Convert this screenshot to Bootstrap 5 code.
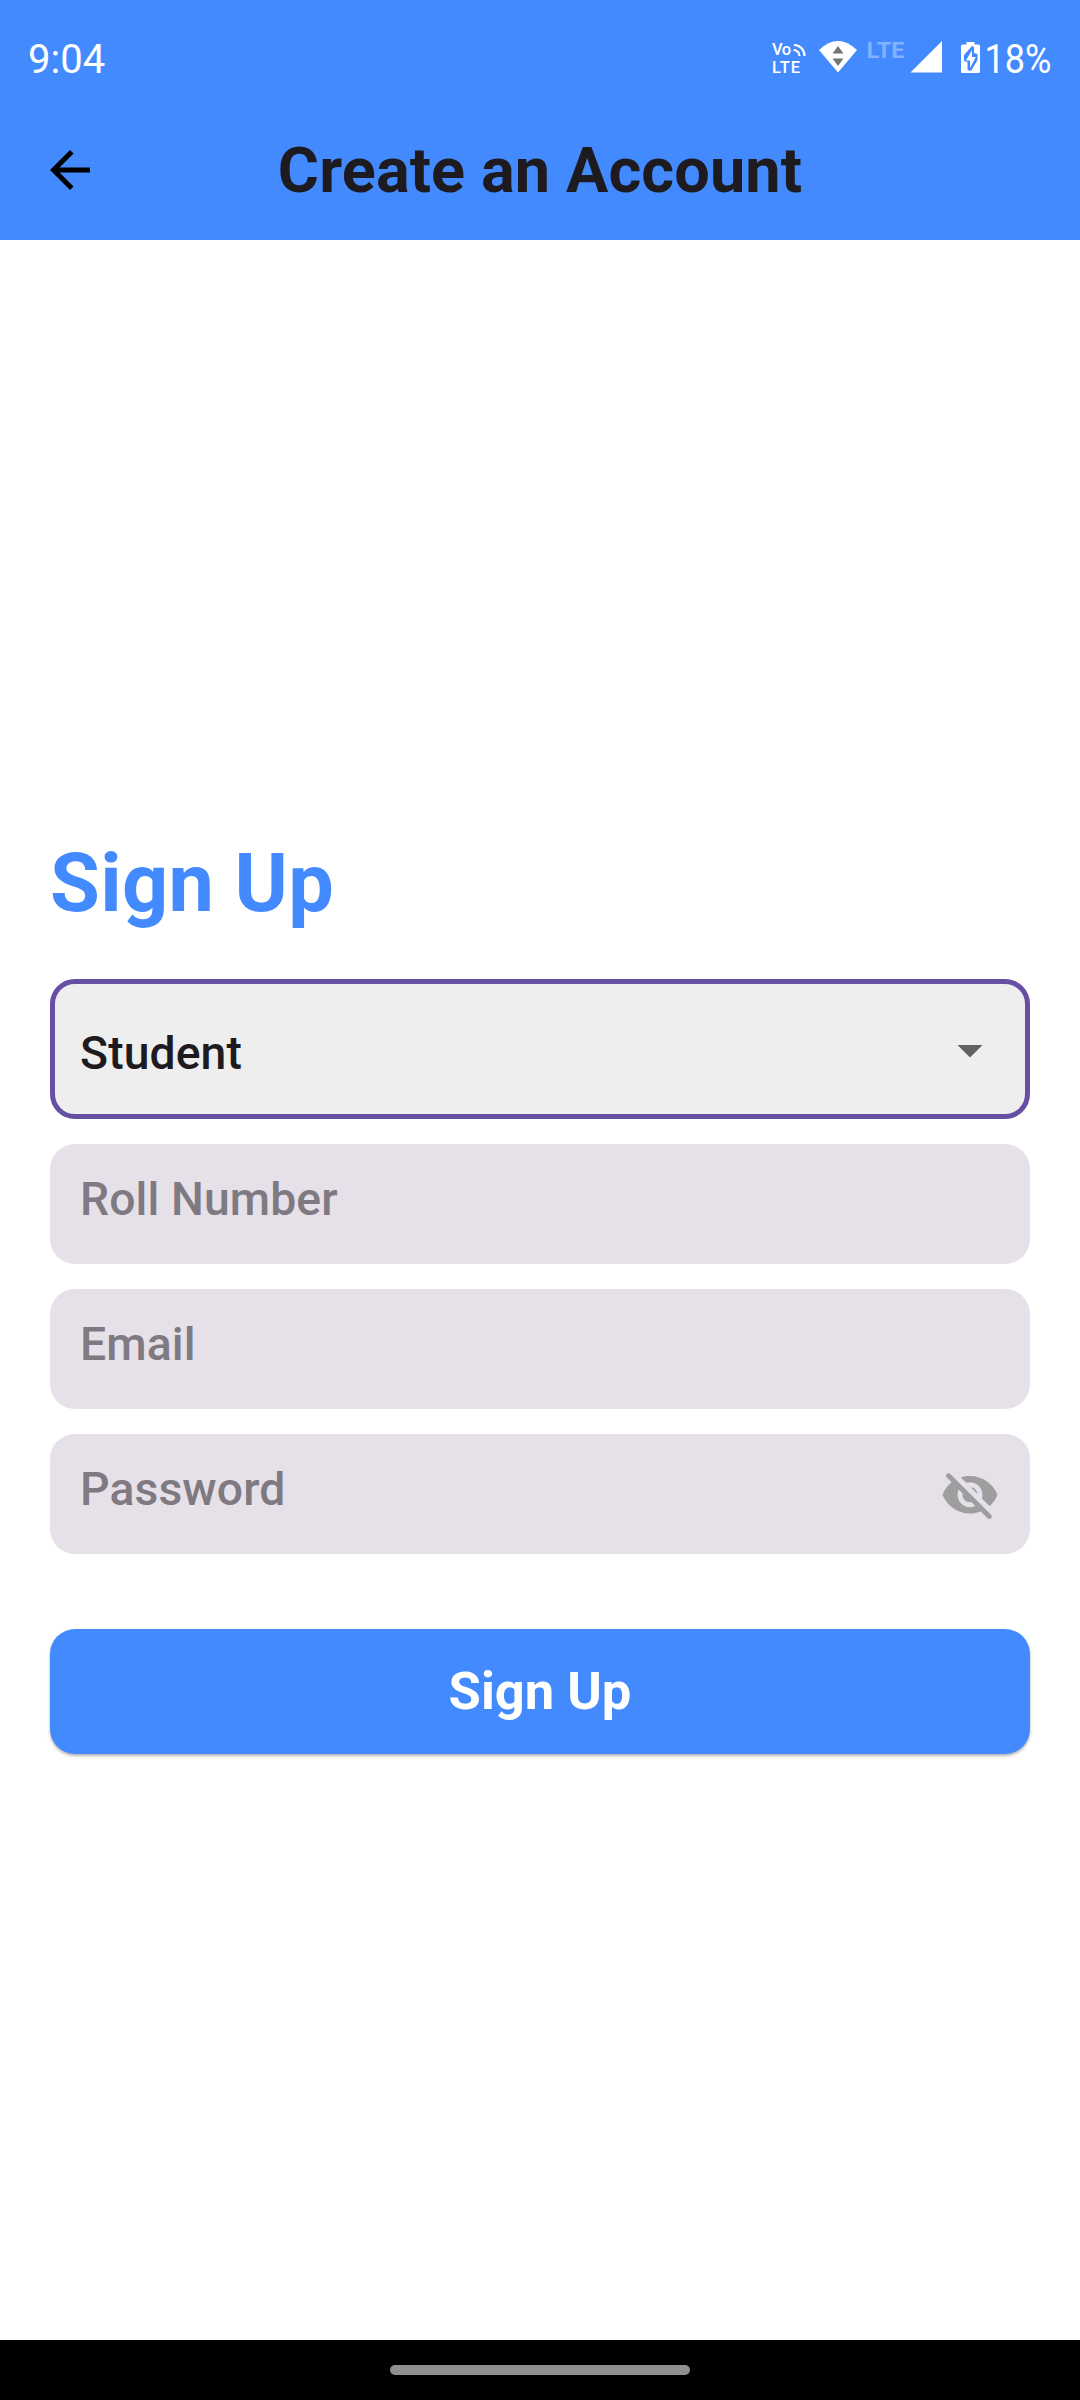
<!DOCTYPE html>
<html lang="en">
<head>
<meta charset="utf-8">
<meta name="viewport" content="width=device-width, initial-scale=1">
<title>Create an Account</title>
<link href="https://cdn.jsdelivr.net/npm/bootstrap@5.3.0/dist/css/bootstrap.min.css" rel="stylesheet">
<style>
body{font-family:Roboto,"Liberation Sans",sans-serif;height:2400px;background:#fff;overflow:hidden}
.app-header{background:#448aff;height:240px}
.status-bar{height:100px;padding:16px 16px 0 28px;font-size:40px;color:#fff}
.status-icons{margin-top:4px}
.clock{line-height:88px}
.app-bar{height:140px;padding:0 40px}
.app-bar svg{width:60px;height:60px}
.app-title{font-size:63px;font-weight:700;color:#1d1b20;line-height:80px;letter-spacing:.1px;padding-top:2px}
.screen-body{padding:0 50px 586px}
.form-title{font-size:81px;font-weight:700;color:#448aff;line-height:94px;margin-bottom:48px;letter-spacing:.3px}
.stack{gap:25px}
.field,.field:focus{height:120px;border:0;border-radius:25px;background:#e6e0e9;padding:0 30px 11px;font-size:46.3px;font-weight:500;letter-spacing:.1px;color:#1d1b20;box-shadow:none}
.field::placeholder{color:#7f7a82;opacity:1}
.picker{height:140px;border:5px solid #6750a4;border-radius:25px;background:#eee;padding:10px 25px 0 25px;font-size:46.3px;font-weight:500;letter-spacing:.1px;color:#1d1b20}
.icon60{width:60px;height:60px}
.picker .icon60{margin-top:-9px}
.eye-btn{right:30px;top:32px;line-height:0}
.submit{height:125px;margin-top:50px;border:0;border-radius:25px;background:#448aff;font-size:52.5px;font-weight:700;color:#fff;box-shadow:0 2px 3px rgba(0,0,0,.3)}
.nav-strip{height:60px;background:#000}
.pill{width:300px;height:10px;border-radius:5px;background:#8f8f8f}
</style>
</head>
<body class="d-flex flex-column">
<header class="app-header flex-shrink-0">
  <div class="status-bar d-flex justify-content-between">
    <span class="clock">9:04</span>
    <svg class="status-icons" width="300" height="76" viewBox="764 20 300 76" font-family="Roboto, sans-serif" fill="#fff">
      <g font-size="16.500" font-weight="500">
        <text x="772" y="55" textLength="19">Vo</text>
        <text x="772" y="72.500" textLength="28">LTE</text>
      </g>
      <g fill="none" stroke="#fff" stroke-width="2.2">
        <path d="M793.5 50a6 6 0 0 1 6 6M794 45a10.500 10.500 0 0 1 10.500 11"/>
      </g>
      <path d="M819 50Q838 32 857 50L838 72.500Z"/>
      <path d="M832.500 53.500L838 46L843.500 53.500ZM832.500 58.500H843.500L838 66Z" fill="#757575"/>
      <text x="866.500" y="57.500" font-size="22" font-weight="700" textLength="38" lengthAdjust="spacingAndGlyphs" fill="#82b1ff">LTE</text>
      <path d="M910.500 72.500L942 41V72.500Z"/>
      <path d="M966.500 44.500V42H974.500V44.500H978.500Q980 44.500 980 46V71.500Q980 73 978.500 73H962.500Q961 73 961 71.500V46Q961 44.500 962.500 44.500Z"/>
      <path d="M972 46L964 55V61L967.500 62V70L971 71L977.500 60V54L974 53V47Z" fill="#448aff"/>
      <path d="M972 50L966 60.500H970V68L975.800 57H972Z"/>
      <text x="984.500" y="73" font-size="40" textLength="67" lengthAdjust="spacingAndGlyphs">18%</text>
    </svg>
  </div>
  <div class="app-bar d-flex align-items-center">
    <svg viewBox="0 0 24 24" aria-label="Back"><path d="M20 11H7.830l5.590-5.590L12 4l-8 8 8 8 1.410-1.410L7.830 13H20z"/></svg>
    <h1 class="app-title flex-grow-1 text-center mb-0">Create an Account</h1>
    <span class="icon60"></span>
  </div>
</header>
<main class="screen-body flex-grow-1 d-flex flex-column justify-content-end">
  <h2 class="form-title">Sign Up</h2>
  <form class="stack d-flex flex-column">
    <div class="picker d-flex align-items-center justify-content-between">
      <span>Student</span>
      <svg class="icon60" viewBox="0 0 24 24" fill="#616161"><path d="M7 10l5 5 5-5z"/></svg>
    </div>
    <input class="form-control field" type="text" placeholder="Roll Number">
    <input class="form-control field" type="email" placeholder="Email">
    <div class="position-relative">
      <input class="form-control field" type="password" placeholder="Password">
      <span class="eye-btn position-absolute"><svg class="icon60" viewBox="0 0 24 24" fill="#9e9e9e"><path d="M12 6.500c2.760 0 5 2.240 5 5 0 .51-.1 1-.24 1.460l3.060 3.060c1.390-1.230 2.490-2.770 3.180-4.530C21.270 7.110 17 4 12 4c-1.270 0-2.490.2-3.640.57l2.170 2.170c.47-.14.96-.24 1.470-.24zM2.710 3.160c-.39.39-.39 1.020 0 1.410l1.970 1.970C3.060 7.830 1.770 9.530 1 11.500 2.730 15.890 7 19 12 19c1.520 0 2.970-.3 4.310-.82l2.720 2.720c.39.39 1.020.39 1.410 0 .39-.39.39-1.020 0-1.410L4.130 3.160c-.39-.39-1.030-.39-1.420 0zM12 16.500c-2.760 0-5-2.240-5-5 0-.77.18-1.500.49-2.140l1.570 1.570c-.03.18-.06.37-.06.57 0 1.660 1.340 3 3 3 .2 0 .38-.03.57-.07L14.140 16c-.65.32-1.370.5-2.140.5zm2.970-5.330c-.15-1.400-1.250-2.490-2.640-2.640l2.640 2.640z"/></svg></span>
    </div>
    <button class="btn submit w-100" type="button">Sign Up</button>
  </form>
</main>
<footer class="nav-strip flex-shrink-0 d-flex align-items-center justify-content-center"><div class="pill"></div></footer>
<script src="https://cdn.jsdelivr.net/npm/bootstrap@5.3.0/dist/js/bootstrap.bundle.min.js"></script>
</body>
</html>
